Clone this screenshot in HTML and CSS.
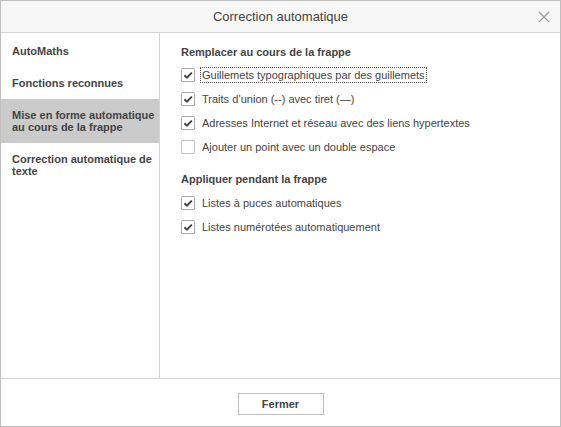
FILE: index.html
```html
<!DOCTYPE html>
<html lang="fr">
<head>
<meta charset="utf-8">
<title>Correction automatique</title>
<link rel="stylesheet" href="styles.css">
</head>
<body>
<div class="dialog">
  <div class="header">
    <div class="title">Correction automatique</div>
    <svg class="close" width="12" height="12" viewBox="0 0 12 12"><path d="M1 1L11 11M11 1L1 11" stroke="#9a9a9a" stroke-width="1.1" fill="none"/></svg>
  </div>
  <div class="body">
    <div class="sidebar">
      <div class="item">AutoMaths</div>
      <div class="item">Fonctions reconnues</div>
      <div class="item selected">Mise en forme automatique au cours de la frappe</div>
      <div class="item">Correction automatique de texte</div>
    </div>
    <div class="content">
      <div class="heading">Remplacer au cours de la frappe</div>
      <div class="group first">
        <div class="row"><span class="box checked"><svg width="12" height="12" viewBox="0 0 12 12"><path d="M2.5 6.2L5 8.6L9.8 3.6" stroke="#444" stroke-width="2" fill="none"/></svg></span><span class="label focus">Guillemets typographiques par des guillemets</span></div>
        <div class="row"><span class="box checked"><svg width="12" height="12" viewBox="0 0 12 12"><path d="M2.5 6.2L5 8.6L9.8 3.6" stroke="#444" stroke-width="2" fill="none"/></svg></span><span class="label">Traits d’union (--) avec tiret (—)</span></div>
        <div class="row"><span class="box checked"><svg width="12" height="12" viewBox="0 0 12 12"><path d="M2.5 6.2L5 8.6L9.8 3.6" stroke="#444" stroke-width="2" fill="none"/></svg></span><span class="label">Adresses Internet et réseau avec des liens hypertextes</span></div>
        <div class="row"><span class="box"></span><span class="label">Ajouter un point avec un double espace</span></div>
      </div>
      <div class="heading second">Appliquer pendant la frappe</div>
      <div class="group">
        <div class="row"><span class="box checked"><svg width="12" height="12" viewBox="0 0 12 12"><path d="M2.5 6.2L5 8.6L9.8 3.6" stroke="#444" stroke-width="2" fill="none"/></svg></span><span class="label">Listes à puces automatiques</span></div>
        <div class="row"><span class="box checked"><svg width="12" height="12" viewBox="0 0 12 12"><path d="M2.5 6.2L5 8.6L9.8 3.6" stroke="#444" stroke-width="2" fill="none"/></svg></span><span class="label">Listes numérotées automatiquement</span></div>
      </div>
    </div>
  </div>
  <div class="footer">
    <button class="btn">Fermer</button>
  </div>
</div>
</body>
</html>
```
FILE: styles.css
```css
html, body {
  margin: 0;
  padding: 0;
  background: #fff;
}
.dialog {
  width: 561px;
  height: 427px;
  box-sizing: border-box;
  border: 1px solid #bfbfbf;
  display: flex;
  flex-direction: column;
  font-family: "Liberation Sans", Arial, sans-serif;
  color: #444;
  font-size: 11px;
}
.header {
  height: 32px;
  box-sizing: border-box;
  flex: none;
  background: #f7f7f7;
  border-bottom: 1px solid #d4d4d4;
  display: flex;
  align-items: center;
  justify-content: center;
  position: relative;
}
.title {
  font-size: 13px;
  color: #444;
}
.close {
  position: absolute;
  right: 10px;
  top: 10px;
}
.body {
  flex: 1;
  display: flex;
  min-height: 0;
}
.sidebar {
  width: 159px;
  flex: none;
  box-sizing: border-box;
  border-right: 1px solid #d4d4d4;
  padding-top: 2px;
}
.item {
  padding: 10px 2px 10px 11px;
  line-height: 12px;
  font-weight: bold;
}
.item.selected {
  background: #cbcbcb;
}
.content {
  flex: 1;
  padding: 11px 0 0 21px;
}
.heading {
  font-weight: bold;
  line-height: 16px;
}
.heading.second {
  margin-top: 12px;
}
.group {
  margin-top: 4px;
}
.group.first {
  margin-top: 3px;
}
.row {
  height: 24px;
  display: flex;
  align-items: center;
}
.box {
  width: 14px;
  height: 14px;
  box-sizing: border-box;
  border: 1px solid #c4c4c4;
  border-radius: 1px;
  display: flex;
  align-items: center;
  justify-content: center;
  background: #fff;
  flex: none;
}
.box.checked {
  border-color: #ababab;
}
.label {
  margin-left: 7px;
  line-height: 12px;
}
.label.focus {
  outline: 1px dotted #555;
  outline-offset: 1px;
}
.footer {
  height: 48px;
  flex: none;
  box-sizing: border-box;
  border-top: 1px solid #d4d4d4;
  display: flex;
  justify-content: center;
  align-items: flex-start;
  padding-top: 14px;
}
.btn {
  width: 86px;
  height: 22px;
  box-sizing: border-box;
  border: 1px solid #c0c0c0;
  background: #fff;
  font-family: "Liberation Sans", Arial, sans-serif;
  font-size: 11px;
  font-weight: bold;
  color: #444;
  padding: 0;
  border-radius: 0;
}
```
